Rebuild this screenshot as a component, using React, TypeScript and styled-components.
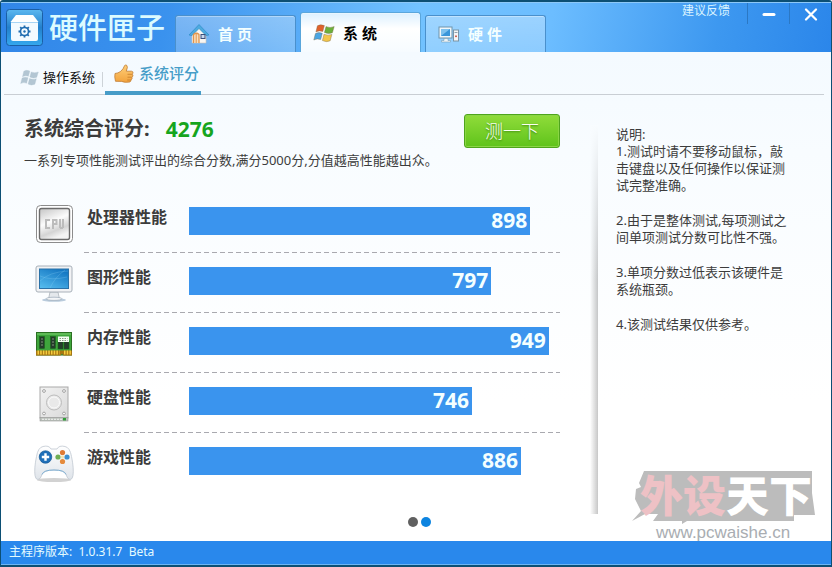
import React from "react";
import styled, { createGlobalStyle } from "styled-components";

const GlobalStyle = createGlobalStyle`
  *, *::before, *::after { box-sizing: border-box; }
  body {
    margin: 0;
    color: #3c3c3c;
    font-family: "Noto Sans", "Noto Sans CJK SC", sans-serif;
    font-size: 13px;
    line-height: 17px;
  }
  h1, h2, p, ul { margin: 0; padding: 0; }
  ul { list-style: none; }
  button { font: inherit; padding: 0; border: 0; background: none; cursor: pointer; }
  a { color: inherit; text-decoration: none; }
  svg { display: block; flex: none; }
`;

const Window = styled.div`
  position: relative;
  display: flex;
  flex-direction: column;
  min-height: 100vh;
  border: 1px solid #0c4f74;
  border-top-width: 2px;
  border-bottom-width: 2px;
  border-radius: 3px 3px 0 0;
  background: linear-gradient(#f4faff 52px, #f8fcff 150px, #ffffff 400px);
  overflow: hidden;
`;

const Header = styled.header`
  display: flex;
  align-items: stretch;
  height: 50px;
  border-top: 1px solid #8cc8f8;
  background: linear-gradient(100deg, #3186e8 0%, #3a92ee 20%, #72c2ff 50%, #6cbdff 66%, #3d98f0 86%, #2b86ea 100%);
`;

const Brand = styled.div`
  display: flex;
  align-items: center;
  gap: 5px;
  width: 174px;
  padding-left: 5px;
`;

const BrandName = styled.h1`
  color: #dcfbff;
  font-size: 29px;
  font-weight: 500;
  line-height: 36px;
  white-space: nowrap;
`;

const Tabs = styled.nav`
  display: flex;
  align-items: flex-end;
  gap: 4px;
`;

const Tab = styled.button<{ $active?: boolean }>`
  display: flex;
  align-items: center;
  gap: 8px;
  width: 121px;
  height: ${(p) => (p.$active ? 40 : 37)}px;
  padding-left: 12px;
  border: 1px solid ${(p) => (p.$active ? "#5aa6dc" : "#4a90cc")};
  border-bottom: 0;
  border-radius: 3px 3px 0 0;
  background: ${(p) =>
    p.$active
      ? "linear-gradient(#dcf0ff, #ffffff 40%, #f6fbff)"
      : "linear-gradient(rgba(255,255,255,0.32), rgba(255,255,255,0.22))"};
  box-shadow: inset 0 1px 0 rgba(255, 255, 255, 0.35);
  color: ${(p) => (p.$active ? "#000" : "#f4ffff")};
  font-size: 15px;
  font-weight: 700;
  line-height: 20px;
`;

const WindowTools = styled.div`
  display: flex;
  align-items: flex-start;
  margin-left: auto;
`;

const Feedback = styled.a`
  margin-right: 17px;
  color: #d9f3ff;
  font-size: 12px;
  line-height: 16px;
`;

const ToolButton = styled.button`
  display: flex;
  align-items: center;
  justify-content: center;
  width: 42px;
  height: 21px;
  border-left: 1px solid #2b78c4;
`;

const SubNav = styled.nav`
  display: flex;
  height: 43px;
  margin: 0 7px 0 3px;
  border-bottom: 1px solid #c9ced4;
`;

const SubTab = styled.button<{ $active?: boolean }>`
  display: flex;
  align-items: center;
  gap: ${(p) => (p.$active ? 5 : 4)}px;
  height: 43px;
  padding: ${(p) => (p.$active ? "4px 2px 0 9px" : "8px 7px 0 16px")};
  border-bottom: ${(p) => (p.$active ? "4px solid #479cc8" : "0")};
  color: ${(p) => (p.$active ? "#469dc8" : "#111")};
  font-size: ${(p) => (p.$active ? 15 : 13)}px;
  font-weight: ${(p) => (p.$active ? 500 : 400)};
`;

const SubDivider = styled.span`
  width: 1px;
  height: 15px;
  margin: 20px 2px 0 0;
  background: #cdd3d8;
`;

const Columns = styled.main`
  display: flex;
  flex: 1;
`;

const Report = styled.section`
  flex: 1;
  padding: 19px 30px 0 23px;
`;

const Summary = styled.div`
  display: flex;
  justify-content: space-between;
  align-items: flex-start;
`;

const Heading = styled.h2`
  display: flex;
  gap: 16px;
  font-size: 20px;
  font-weight: 700;
  line-height: 30px;
`;

const Total = styled.span`
  color: #16a51e;
  font-size: 21px;
`;

const Hint = styled.p`
  margin-top: 8px;
  line-height: 17px;
`;

const TestButton = styled.button`
  width: 96px;
  height: 34px;
  border: 1px solid #4ea51c;
  border-radius: 3px;
  background: linear-gradient(#90dc3a, #5fc31b);
  box-shadow: inset 0 0 0 1px #8ad545;
  color: #fbfff2;
  font-size: 18px;
  font-weight: 300;
  line-height: 30px;
  text-shadow: 0 1px 2px #3b8510;
`;

const ScoreList = styled.ul`
  padding: 24px 0 0 10px;
`;

const ScoreRow = styled.li`
  display: flex;
  gap: 10px;
  height: 60px;
`;

const IconCell = styled.div`
  display: flex;
  align-items: center;
  justify-content: center;
  width: 40px;
  padding-top: 2px;
`;

const ScoreBody = styled.div`
  display: flex;
  flex: 1;
  align-items: flex-start;
  padding-left: 3px;
  ${ScoreRow}:not(:last-child) & {
    background: repeating-linear-gradient(90deg, #a9a9af 0 5px, transparent 5px 8px) left bottom / 100% 1px no-repeat;
  }
`;

const ScoreLabel = styled.span`
  width: 102px;
  margin-top: 12px;
  font-size: 16px;
  font-weight: 700;
  line-height: 24px;
`;

const Track = styled.div`
  flex: 1;
  margin-top: 14px;
`;

const Bar = styled.div`
  height: 28px;
  padding-right: 3px;
  background: #3a94ee;
  color: #f4ffff;
  font-size: 21px;
  font-weight: 700;
  line-height: 26px;
  text-align: right;
`;

const Notes = styled.aside`
  display: flex;
  width: 241px;
`;

const NotesEdge = styled.span`
  width: 8px;
  margin-top: 30px;
  background: linear-gradient(#f8fcff, transparent 40%), linear-gradient(90deg, rgba(0, 0, 0, 0), rgba(0, 0, 0, 0.22));
`;

const NotesText = styled.div`
  display: flex;
  flex: 1;
  flex-direction: column;
  gap: 18px;
  padding: 31px 42px 0 18px;
`;

const Note = styled.p`
  white-space: pre-line;
`;

const Pager = styled.div`
  display: flex;
  justify-content: center;
  align-items: flex-start;
  gap: 3px;
  height: 27px;
  padding: 3px 0 0 6px;
`;

const Dot = styled.button<{ $active?: boolean }>`
  width: 10px;
  height: 10px;
  border-radius: 50%;
  background: ${(p) => (p.$active ? "#0d84e0" : "#606060")};
`;

const Footer = styled.footer`
  height: 24px;
  padding-left: 8px;
  border-bottom: 1px solid #6cb4f4;
  background: #2988ec;
  color: #e4fbff;
  font-size: 12px;
  line-height: 22px;
  white-space: pre;
`;

const Watermark = styled.div`
  position: absolute;
  right: 12px;
  bottom: 18px;
  pointer-events: none;
`;

const BoxLogo = () => (
  <svg width="38" height="38" viewBox="0 0 38 38">
    <defs>
      <linearGradient id="logoBg" x1="0" y1="0" x2="0" y2="1">
        <stop offset="0" stopColor="#5cb8f0" />
        <stop offset="0.5" stopColor="#2380cc" />
        <stop offset="1" stopColor="#35a8ee" />
      </linearGradient>
    </defs>
    <rect x="0.500" y="0.500" width="36" height="36" rx="3" fill="url(#logoBg)" stroke="#1b5fa6" />
    <path d="M10 6h17l5.500 7h-28z" fill="#fff" />
    <path d="M5 14h27v16a2 2 0 0 1-2 2H7a2 2 0 0 1-2-2z" fill="#f3faff" />
    <path d="M5 13.500h27" stroke="#a8d4f4" />
    <circle cx="18.500" cy="22.500" r="4" fill="none" stroke="#1f6cb0" strokeWidth="1.600" />
    <circle cx="18.500" cy="22.500" r="1.200" fill="#1f6cb0" />
    <path d="M18.500 16.500v2M18.500 26.500v2M12.500 22.500h2M22.500 22.500h2M14.200 18.200l1.500 1.500M21.300 25.300l1.500 1.500M22.800 18.200l-1.500 1.500M15.700 25.300l-1.500 1.500" stroke="#1f6cb0" strokeWidth="1.800" />
  </svg>
);

const HomeIcon = () => (
  <svg width="22" height="22" viewBox="0 0 22 22">
    <path d="M4 11l7-7 7 7v9H4z" fill="#f8f6f2" stroke="#c9c4bb" strokeWidth="0.600" />
    <path d="M1 12L11 1.500 21 12l-3 0.500-7-7-7 7z" fill="#4caadf" stroke="#2f8cc6" strokeWidth="0.700" />
    <path d="M5.500 20v-8.500q3-2.500 5.500 0V20" fill="#f9e0bd" stroke="#e2954d" strokeWidth="1.300" />
    <path d="M8.200 11v9" stroke="#e2954d" />
    <rect x="13" y="11.500" width="4" height="4" fill="#c7d8ee" stroke="#3a4f7c" />
  </svg>
);

const FLAG = [
  "M4.400 1.800Q7.500-0.200 11.400 1.600L9.800 7.600Q6.500 6 2.900 8z",
  "M13 2.600Q17 4.400 21.200 2.600L19.400 8.800Q15.500 10.400 11.400 8.500z",
  "M2.400 9.600Q5.800 7.700 9.300 9.300L7.700 15.600Q4.300 14 0.800 16z",
  "M11 10.200Q15 12 18.900 10.400L17.200 16.800Q13.300 18.600 9.400 16.600z",
];

const FlagIcon = ({ size, colors, edge }: { size: number; colors: string[]; edge: string }) => (
  <svg width={size} height={size} viewBox="0 0 22 18">
    {FLAG.map((d, i) => (
      <path key={d} d={d} fill={colors[i]} stroke={edge} strokeWidth="0.400" />
    ))}
  </svg>
);

const PcIcon = () => (
  <svg width="22" height="20" viewBox="0 0 22 20">
    <rect x="1" y="3" width="13" height="11" fill="#f0f7fb" stroke="#6f94ab" />
    <rect x="3" y="5" width="9" height="7" fill="#3a96da" />
    <path d="M3 5h9L3 12z" fill="#7fc2ee" />
    <path d="M6 14.500h4v2h2.500v1.500h-9v-1.500H6z" fill="#eef4f8" stroke="#6f94ab" strokeWidth="0.500" />
    <rect x="15.500" y="6" width="5" height="11" fill="#f4f6f8" stroke="#7b95a6" />
    <path d="M16.500 8.500h3" stroke="#8fa3b0" />
    <rect x="17.200" y="11.500" width="1.600" height="1.600" fill="#c8402c" />
  </svg>
);

const ThumbIcon = () => (
  <svg width="20" height="20" viewBox="0 0 20 20">
    <defs>
      <linearGradient id="thumb" x1="0" y1="0" x2="0" y2="1">
        <stop offset="0" stopColor="#ffd07a" />
        <stop offset="1" stopColor="#f2a23c" />
      </linearGradient>
    </defs>
    <path
      d="M1 9.500Q4 9.300 6.500 7.500 9.500 5 10.500 1.800 11 0.400 12.600 1.200 14.300 2.400 12.300 7.200h5.200q1.600 0.200 1.500 1.600 0 1-0.800 1.400 1 0.500 0.700 1.700-0.200 1-1.100 1.300 0.600 0.700 0.200 1.600-0.300 0.900-1.200 1.100 0.300 0.700-0.100 1.300-0.500 0.900-1.700 0.900-4 0.700-7.500-0.700L1.500 17.300Q0.300 13 1 9.500z"
      fill="url(#thumb)"
      stroke="#c07c34"
      strokeWidth="0.800"
    />
    <path d="M13.500 10.300h4.500M13.500 13.200h4M13.200 16h3.400" stroke="#c67c28" strokeWidth="0.800" />
  </svg>
);

const CpuIcon = () => (
  <svg width="38" height="40" viewBox="0 0 38 40">
    <defs>
      <linearGradient id="cpu" x1="0" y1="0" x2="0.400" y2="1">
        <stop offset="0" stopColor="#c4c4c4" />
        <stop offset="0.500" stopColor="#fcfcfc" />
        <stop offset="0.800" stopColor="#d4d4d4" />
        <stop offset="1" stopColor="#f4f4f4" />
      </linearGradient>
    </defs>
    <rect x="1.500" y="1.500" width="36" height="37" rx="4" fill="#fff" stroke="#8c8c8c" />
    <rect x="4.500" y="4.500" width="30" height="31" rx="2" fill="url(#cpu)" stroke="#6c6c6c" strokeWidth="1.400" />
    <path d="M15 16h-4v8h4M18 25V16h3.500v4H18M25 15v9M28 15v9M25 24h3" fill="none" stroke="#bcbcbc" strokeWidth="2" />
  </svg>
);

const MonitorIcon = () => (
  <svg width="38" height="38" viewBox="0 0 38 38">
    <defs>
      <linearGradient id="screen" x1="0" y1="1" x2="0.600" y2="0">
        <stop offset="0" stopColor="#59bff0" />
        <stop offset="1" stopColor="#1679c4" />
      </linearGradient>
    </defs>
    <ellipse cx="19" cy="35" rx="12" ry="1.800" fill="#b9cbdc" />
    <path d="M15 27h8l1.500 7h-11z" fill="#e4e8ec" stroke="#a3abb3" strokeWidth="0.700" />
    <ellipse cx="19" cy="33.800" rx="8" ry="1.600" fill="#f4f6f8" stroke="#9ba9b8" strokeWidth="0.700" />
    <rect x="1" y="1" width="36" height="26" rx="2" fill="#f1f2f4" stroke="#a8b1ba" />
    <rect x="4.500" y="4" width="29" height="19.500" fill="url(#screen)" stroke="#2b72a8" />
    <path d="M5 16Q14 7 33 6M5 11Q16 16 32 12M15 23Q20 12 30 5" fill="none" stroke="#8fd4f6" strokeWidth="0.500" opacity="0.500" />
  </svg>
);

const MemoryIcon = () => (
  <svg width="38" height="26" viewBox="0 0 38 26">
    <rect x="1.500" y="1.500" width="35" height="22.500" fill="#3ea53c" stroke="#2a6f22" />
    <path d="M2 3h34" stroke="#7ed071" />
    <path d="M1 19.500h36v5H28.500l-1.500-2-1.500 2H1z" fill="#a97612" />
    <path d="M2.500 21.500h22M29 21.500h8" stroke="#f4cf40" strokeWidth="4" strokeDasharray="1.500 1.200" />
    <g fill="#243c2a" stroke="#176016" strokeWidth="0.500">
      <rect x="4.500" y="5.500" width="5" height="12" />
      <rect x="15.500" y="5.500" width="5" height="12" />
      <rect x="23" y="10" width="5" height="8" />
      <rect x="29" y="10" width="5" height="8" />
    </g>
    <path d="M7 7v9M18 7v9" stroke="#83927c" strokeDasharray="2 1" />
    <rect x="23" y="5.500" width="11" height="5.500" fill="#f5fff3" />
    <path d="M24.500 7.500h8M24.500 9.500h8" stroke="#6c7c68" strokeWidth="0.800" strokeDasharray="1.500 1" />
  </svg>
);

const DiskIcon = () => (
  <svg width="32" height="36" viewBox="0 0 32 36">
    <defs>
      <linearGradient id="disk" x1="0" y1="0" x2="1" y2="1">
        <stop offset="0" stopColor="#f2f2f2" />
        <stop offset="1" stopColor="#dadada" />
      </linearGradient>
    </defs>
    <rect x="2" y="1" width="28" height="31" fill="url(#disk)" stroke="#a9a9a9" />
    <rect x="2" y="31.500" width="28" height="3.500" fill="#bdc3bd" stroke="#989898" strokeWidth="0.600" />
    <path d="M4 33.300h20" stroke="#f2f2f2" strokeDasharray="2 1" />
    <rect x="25" y="32" width="3" height="2.500" fill="#31a038" />
    <circle cx="16" cy="16.500" r="7.500" fill="#e9e9e9" stroke="#bcbcbc" />
    <circle cx="16" cy="16.500" r="5.500" fill="none" stroke="#fafafa" />
    <g fill="#fff" stroke="#999" strokeWidth="0.900">
      <circle cx="6" cy="5" r="1.400" />
      <circle cx="26" cy="5" r="1.400" />
      <circle cx="6" cy="27.500" r="1.400" />
      <circle cx="26" cy="27.500" r="1.400" />
    </g>
  </svg>
);

const GamepadIcon = () => (
  <svg width="40" height="38" viewBox="0 0 40 38">
    <defs>
      <linearGradient id="pad" x1="0" y1="0" x2="0" y2="1">
        <stop offset="0" stopColor="#ffffff" />
        <stop offset="1" stopColor="#dfe4ea" />
      </linearGradient>
    </defs>
    <ellipse cx="20" cy="35" rx="17" ry="2" fill="#d2d2d2" />
    <path
      d="M9 1.500Q15 0 17 4h6q2-4 8-2.500 5 1 6.500 10 2.500 12 1.500 19-0.500 4-3 4-2.500 0-4-5-1.500-4.500-12-4.500t-12 4.500q-1.500 5-4 5-2.500 0-3-4-1-7 1.500-19 1.500-9 6.500-10z"
      fill="url(#pad)"
      stroke="#c0c8d0"
      strokeWidth="0.800"
    />
    <path d="M8 29.500q1.500-4.500 12-4.500t12 4.500" fill="none" stroke="#7fb0d4" />
    <circle cx="11.500" cy="12" r="6.300" fill="#1f6fb8" stroke="#12548f" strokeWidth="0.600" />
    <path d="M11.500 8.300v7.400M7.800 12h7.400" stroke="#fff" strokeWidth="2.400" />
    <circle cx="28.500" cy="7.500" r="2.600" fill="#e07a34" />
    <circle cx="28.500" cy="16.500" r="2.600" fill="#e58a3c" />
    <circle cx="24" cy="12" r="2.600" fill="#6fae54" />
    <circle cx="33" cy="12" r="2.600" fill="#3d8fd0" />
    <circle cx="28.500" cy="12" r="1.800" fill="#f4e3b4" />
  </svg>
);

const WatermarkArt = () => (
  <svg width="188" height="92" viewBox="0 -14 188 92">
    <path d="M13 2H181V24L184 46H163V52H56L51 55 51 52H22L27 45H14L1 52 10 42 4 30 5 20 10 18 8 14z" fill="#bcbcbc" />
    <g fontFamily='"Noto Sans CJK SC", sans-serif' fontWeight="900" fontSize="43">
      <text x="9" y="43" fill="#eec1c5">外设</text>
      <text x="95" y="43" fill="#ffffff">天下</text>
    </g>
    <text x="25" y="69" fill="#a9adb2" fontFamily='"Liberation Sans", sans-serif' fontSize="17">
      www.pcwaishe.cn
    </text>
  </svg>
);

const SCORES = [
  { name: "处理器性能", score: 898, fill: 92, icon: <CpuIcon /> },
  { name: "图形性能", score: 797, fill: 81.5, icon: <MonitorIcon /> },
  { name: "内存性能", score: 949, fill: 97, icon: <MemoryIcon /> },
  { name: "硬盘性能", score: 746, fill: 76.3, icon: <DiskIcon /> },
  { name: "游戏性能", score: 886, fill: 89.5, icon: <GamepadIcon /> },
];

const NOTES = [
  "说明:\n1.测试时请不要移动鼠标，敲击键盘以及任何操作以保证测试完整准确。",
  "2.由于是整体测试,每项测试之间单项测试分数可比性不强。",
  "3.单项分数过低表示该硬件是系统瓶颈。",
  "4.该测试结果仅供参考。",
];

export default function App() {
  return (
    <>
      <GlobalStyle />
      <Window>
        <Header>
          <Brand>
            <BoxLogo />
            <BrandName>硬件匣子</BrandName>
          </Brand>
          <Tabs>
            <Tab>
              <HomeIcon />首 页
            </Tab>
            <Tab $active>
              <FlagIcon size={22} colors={["#e0622c", "#6bb03a", "#4ba6e4", "#f2c54a"]} edge="#7a6a4a" />
              系 统
            </Tab>
            <Tab>
              <PcIcon />硬 件
            </Tab>
          </Tabs>
          <WindowTools>
            <Feedback href="#feedback">建议反馈</Feedback>
            <ToolButton aria-label="最小化">
              <svg width="14" height="14" viewBox="0 0 14 14">
                <path d="M2 7.500h10" stroke="#fff" strokeWidth="3" strokeLinecap="round" />
              </svg>
            </ToolButton>
            <ToolButton aria-label="关闭">
              <svg width="14" height="14" viewBox="0 0 14 14">
                <path d="M2 2.500l10 10M12 2.500l-10 10" stroke="#fff" strokeWidth="2.200" strokeLinecap="round" />
              </svg>
            </ToolButton>
          </WindowTools>
        </Header>

        <SubNav>
          <SubTab>
            <FlagIcon size={19} colors={["#b3c6d3", "#b3c6d3", "#b3c6d3", "#b3c6d3"]} edge="#b3c6d3" />
            操作系统
          </SubTab>
          <SubDivider />
          <SubTab $active>
            <ThumbIcon />
            系统评分
          </SubTab>
        </SubNav>

        <Columns>
          <Report>
            <Summary>
              <div>
                <Heading>
                  系统综合评分:<Total>4276</Total>
                </Heading>
                <Hint>一系列专项性能测试评出的综合分数,满分5000分,分值越高性能越出众。</Hint>
              </div>
              <TestButton>测一下</TestButton>
            </Summary>
            <ScoreList>
              {SCORES.map((s) => (
                <ScoreRow key={s.name}>
                  <IconCell>{s.icon}</IconCell>
                  <ScoreBody>
                    <ScoreLabel>{s.name}</ScoreLabel>
                    <Track>
                      <Bar style={{ width: `${s.fill}%` }}>{s.score}</Bar>
                    </Track>
                  </ScoreBody>
                </ScoreRow>
              ))}
            </ScoreList>
          </Report>
          <Notes>
            <NotesEdge />
            <NotesText>
              {NOTES.map((n) => (
                <Note key={n}>{n}</Note>
              ))}
            </NotesText>
          </Notes>
        </Columns>

        <Pager>
          <Dot aria-label="第一页" />
          <Dot $active aria-label="第二页" />
        </Pager>
        <Footer>主程序版本:  1.0.31.7  Beta</Footer>
        <Watermark>
          <WatermarkArt />
        </Watermark>
      </Window>
    </>
  );
}
